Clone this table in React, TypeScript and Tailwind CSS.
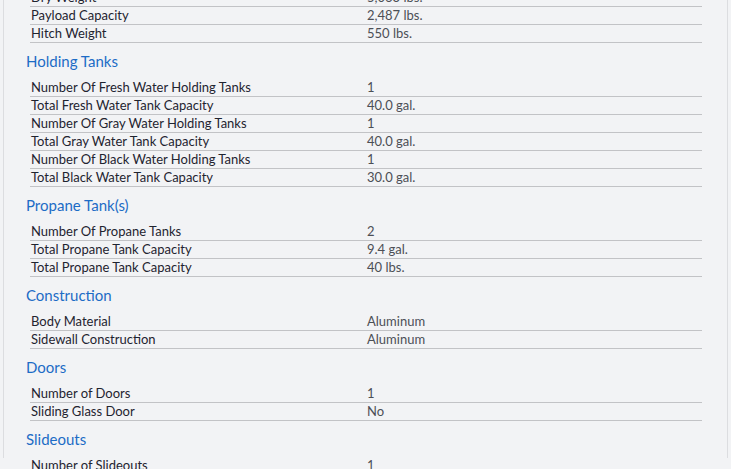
import React from "react";

type Row = { label: string; value: string };
type Section = { title?: string; rows: Row[] };

const sections: Section[] = [
  {
    rows: [
      { label: "Dry Weight", value: "5,063 lbs." },
      { label: "Payload Capacity", value: "2,487 lbs." },
      { label: "Hitch Weight", value: "550 lbs." },
    ],
  },
  {
    title: "Holding Tanks",
    rows: [
      { label: "Number Of Fresh Water Holding Tanks", value: "1" },
      { label: "Total Fresh Water Tank Capacity", value: "40.0 gal." },
      { label: "Number Of Gray Water Holding Tanks", value: "1" },
      { label: "Total Gray Water Tank Capacity", value: "40.0 gal." },
      { label: "Number Of Black Water Holding Tanks", value: "1" },
      { label: "Total Black Water Tank Capacity", value: "30.0 gal." },
    ],
  },
  {
    title: "Propane Tank(s)",
    rows: [
      { label: "Number Of Propane Tanks", value: "2" },
      { label: "Total Propane Tank Capacity", value: "9.4 gal." },
      { label: "Total Propane Tank Capacity", value: "40 lbs." },
    ],
  },
  {
    title: "Construction",
    rows: [
      { label: "Body Material", value: "Aluminum" },
      { label: "Sidewall Construction", value: "Aluminum" },
    ],
  },
  {
    title: "Doors",
    rows: [
      { label: "Number of Doors", value: "1" },
      { label: "Sliding Glass Door", value: "No" },
    ],
  },
  {
    title: "Slideouts",
    rows: [{ label: "Number of Slideouts", value: "1" }],
  },
];

export default function App() {
  return (
    <div className="w-[731px] h-[469px] overflow-hidden bg-[#f2f3f5] font-['Lato',sans-serif]">
      <div className="ml-[3px] w-[725px] h-full border-x border-[#dcdde0] -mt-[11px]">
        {sections.map((s, i) => (
          <div key={i}>
            {s.title && (
              <h2 className="mt-[8px] mb-[8px] h-[20px] leading-[20px] pl-[22px] text-[15px] text-[#1d6cc6]">
                {s.title}
              </h2>
            )}
            <div className="ml-[26px] w-[672px]">
              {s.rows.map((r, j) => (
                <div
                  key={j}
                  className="grid grid-cols-2 h-[18px] border-b border-[#c2c3c6] text-[13px] leading-[17px]"
                >
                  <div className="pl-[1px] text-[#1f2430]">{r.label}</div>
                  <div className="pl-[1px] text-[#4c4f55]">{r.value}</div>
                </div>
              ))}
            </div>
          </div>
        ))}
      </div>
    </div>
  );
}
